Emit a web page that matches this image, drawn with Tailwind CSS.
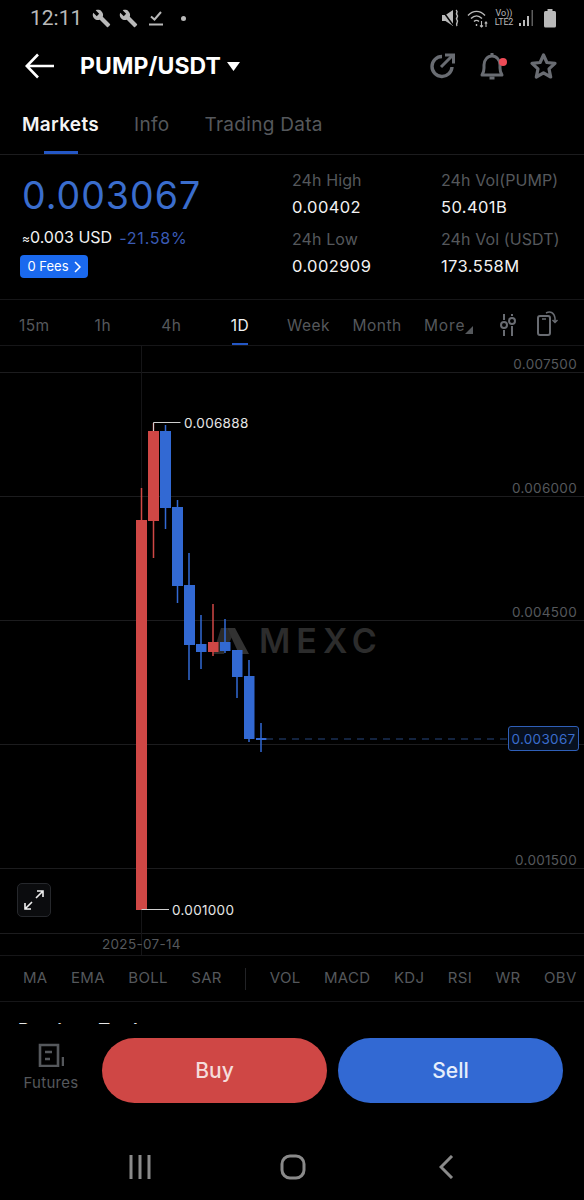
<!DOCTYPE html>
<html lang="en">
<head>
<meta charset="UTF-8" />
<meta name="viewport" content="width=device-width, initial-scale=1.0" />
<title>PUMP/USDT</title>
<script src="https://cdn.jsdelivr.net/npm/@tailwindcss/browser@4"></script>
</head>
<body class="bg-black">
<div class="w-[584px] h-[1200px] overflow-hidden bg-black text-white font-['Inter',sans-serif]">

  <!-- status bar -->
  <div class="h-9 flex items-center pl-[30px] pr-[28px] text-[#b9b9b9]">
    <span class="font-['Roboto',sans-serif] text-[21px] leading-none w-[62px]">12:11</span>
    <svg class="w-[19px] h-[19px]" viewBox="0 0 24 24" fill="currentColor"><path d="M22.7 19l-9.1-9.1c.9-2.3.4-5-1.5-6.9-2-2-5-2.4-7.4-1.3L9 6 6 9 1.6 4.7C.4 7.1.9 10.1 2.9 12.1c1.9 1.9 4.6 2.4 6.9 1.5l9.1 9.1c.4.4 1 .4 1.4 0l2.3-2.3c.5-.4.5-1.1.1-1.4z"/></svg>
    <svg class="w-[19px] h-[19px] ml-2" viewBox="0 0 24 24" fill="currentColor"><path d="M22.7 19l-9.1-9.1c.9-2.3.4-5-1.5-6.9-2-2-5-2.4-7.4-1.3L9 6 6 9 1.6 4.7C.4 7.1.9 10.1 2.9 12.1c1.9 1.9 4.6 2.4 6.9 1.5l9.1 9.1c.4.4 1 .4 1.4 0l2.3-2.3c.5-.4.5-1.1.1-1.4z"/></svg>
    <svg class="w-[16px] h-[16px] ml-[10px]" viewBox="0 0 16 16" fill="none" stroke="currentColor" stroke-width="2"><path d="M3 6.500l3.500 3L13 2"/><path d="M1 14.500h14"/></svg>
    <span class="w-[5px] h-[5px] rounded-full bg-[#b9b9b9] ml-[17px]"></span>
    <div class="flex-1"></div>
    <svg class="w-[18px] h-[18px]" viewBox="0 0 18 18" fill="currentColor"><path d="M0 6h3.500L11 1v16l-7.500-5H0z"/><path d="M0 1l11 15" stroke="#000" stroke-width="1.500"/><path d="M14 1c3 2-1 3 1 5s-2 3 0 5-2 3 0 6" fill="none" stroke="currentColor" stroke-width="1.500"/></svg>
    <svg class="w-[21px] h-[19px] ml-[7px]" viewBox="0 0 21 19" fill="none" stroke="currentColor" stroke-width="1.400"><path d="M1 6.500c5-5.500 12-5.500 17 0"/><path d="M4 9.500c3.500-3.500 7.500-3.500 11 0"/><path d="M7 12.500c1.500-1.500 3.500-1.500 5 0"/><path d="M9.500 15v2"/><path d="M14.500 12v6M13 16.500l1.500 1.500 1.500-1.500M19 18v-5M17.800 14.500l1.200-1.500 1.200 1.500" stroke-width="1.100"/></svg>
    <div class="ml-[5px] w-[22px] text-[9px] leading-[9px] text-center font-['Roboto',sans-serif]">
      <div>Vo))</div>
      <div class="tracking-[-0.2px]">LTE2</div>
    </div>
    <svg class="w-[16px] h-[17px] ml-[3px]" viewBox="0 0 16 17" fill="currentColor"><rect x="1" y="13" width="2" height="3"/><rect x="5" y="10" width="2" height="6"/><rect x="9" y="6" width="2" height="10"/><rect x="13.500" y="0" width="1.500" height="16" opacity=".5"/></svg>
    <svg class="w-[12px] h-[19px] ml-[10px]" viewBox="0 0 12 19" fill="currentColor"><rect x="3.500" y="0" width="5" height="2.500"/><rect x="0" y="2" width="12" height="16.500" rx="1.500"/></svg>
  </div>

  <!-- header -->
  <div class="h-[60px] flex items-center pl-[25px] pr-[26px]">
    <svg class="w-[30px] h-[26px]" viewBox="0 0 30 26" fill="none" stroke="#fff" stroke-width="2.600"><path d="M29 13H2M13 1.500L1.800 13 13 24.500"/></svg>
    <span class="ml-[25px] text-[23px] leading-none font-bold tracking-[0.1px]">PUMP/USDT</span>
    <svg class="ml-[6px] w-[13px] h-[9px]" viewBox="0 0 13 9" fill="#fff"><path d="M0 0h13L6.500 9z"/></svg>
    <div class="flex-1"></div>
    <svg class="w-[28px] h-[28px]" viewBox="0 0 28 28" fill="none" stroke="#696c72" stroke-width="3.400"><path d="M14 4.500A10 10 0 1 0 24 15"/><path d="M13 15L24 4" stroke-width="3"/><path d="M17 3h8.500v8.500" stroke-width="3"/></svg>
    <svg class="ml-[23px] w-[26px] h-[30px]" viewBox="0 0 26 30" fill="none" stroke="#696c72" stroke-width="3"><path d="M3 24c1.500-2 2-3.500 2-7v-3c0-5 3.500-9 8-9s8 4 8 9v3c0 3.500.5 5 2 7z" stroke-linejoin="round"/><path d="M10.500 27h5" stroke-width="3"/><path d="M13 2v3"/></svg>
    <svg class="ml-[24px] w-[29px] h-[29px]" viewBox="0 0 29 29" fill="none" stroke="#696c72" stroke-width="3.200" stroke-linejoin="round"><path d="M14.500 3l3.400 7.500 8.100.9-6 5.500 1.700 8.100-7.200-4.100-7.200 4.100 1.700-8.100-6-5.500 8.100-.9z"/></svg>
  </div>
  <div class="relative -mt-[60px] h-[60px] pointer-events-none">
    <span class="absolute left-[499px] top-[22px] w-[8px] h-[8px] rounded-full bg-[#ee4b57]"></span>
  </div>

  <!-- tabs -->
  <div class="h-[59px] flex gap-[35px] px-[22px] pt-4 border-b border-[#1c1c1e] text-[19px] leading-[26px] text-[#55585c] tracking-[0.3px]">
    <div class="flex flex-col items-center">
      <span class="font-semibold text-[#f4f4f4]">Markets</span>
      <span class="mt-[13px] w-[34px] h-[3px] bg-[#2457c5]"></span>
    </div>
    <span>Info</span>
    <span>Trading Data</span>
  </div>

  <!-- price stats -->
  <div class="h-[145px] flex border-b border-[#161618]">
    <div class="w-[292px] pl-[22px]">
      <div class="mt-[18px] text-[37.500px] leading-[46px] tracking-[1px] text-[#3a6dcd]">0.003067</div>
      <div class="mt-[9px] flex items-center text-[16px] leading-[18px] whitespace-nowrap">
        <span class="text-[#f2f2f2]"><span class="text-[12px]">≈</span>0.003 USD</span>
        <span class="ml-[7px] text-[#3a5bb5] tracking-[0.8px]">-21.58%</span>
      </div>
      <div class="mt-[7px] -ml-[2px] w-[68px] h-[23px] rounded-[4px] bg-[#1a69ee] flex items-center justify-center gap-[5px] text-[13px] leading-none">
        <span>0 Fees</span>
        <svg class="w-[7px] h-[12px]" viewBox="0 0 7 12" fill="none" stroke="#fff" stroke-width="1.500"><path d="M1 1l5 5-5 5"/></svg>
      </div>
    </div>
    <div class="w-[149px] pt-[14px] text-[16px] leading-[22px] tracking-[0.1px]">
      <div class="text-[#55585c]">24h High</div>
      <div class="mt-[5px] text-[#f2f2f2] text-[16.500px] tracking-[0.4px]">0.00402</div>
      <div class="mt-[10px] text-[#55585c]">24h Low</div>
      <div class="mt-[5px] text-[#f2f2f2] text-[16.500px] tracking-[0.4px]">0.002909</div>
    </div>
    <div class="flex-1 pt-[14px] text-[16px] leading-[22px] tracking-[0.1px] whitespace-nowrap">
      <div class="text-[#55585c]">24h Vol(PUMP)</div>
      <div class="mt-[5px] text-[#f2f2f2] text-[16.500px] tracking-[0.4px]">50.401B</div>
      <div class="mt-[10px] text-[#55585c]">24h Vol (USDT)</div>
      <div class="mt-[5px] text-[#f2f2f2] text-[16.500px] tracking-[0.4px]">173.558M</div>
    </div>
  </div>

  <!-- timeframes -->
  <div class="h-[46px] flex border-b border-[#161618] text-[15.500px] text-[#55585c] tracking-[0.5px]">
    <div class="w-[480px] grid grid-cols-7 text-center">
      <span class="pt-[17px] leading-[18px]">15m</span>
      <span class="pt-[17px] leading-[18px]">1h</span>
      <span class="pt-[17px] leading-[18px]">4h</span>
      <span class="relative pt-[17px] leading-[18px] text-[#f2f2f2]">1D<span class="absolute left-[26px] bottom-0 w-[16px] h-[2px] bg-[#2457c5]"></span></span>
      <span class="pt-[17px] leading-[18px]">Week</span>
      <span class="pt-[17px] leading-[18px]">Month</span>
      <span class="relative pt-[17px] leading-[18px] -ml-[2px] tracking-[0.9px]">More<svg class="absolute left-[56px] top-[26px] w-[8px] h-[8px]" viewBox="0 0 8 8" fill="#55585c"><path d="M8 0v8H0z"/></svg></span>
    </div>
    <svg class="ml-[19px] mt-[13px] w-[18px] h-[24px]" viewBox="0 0 18 24" fill="none" stroke="#696c72" stroke-width="2"><path d="M5 1v6M5 17v6M13 1v2M13 13v10"/><circle cx="5" cy="12" r="3"/><circle cx="13" cy="8" r="3"/></svg>
    <svg class="ml-[20px] mt-[10px] w-[21px] h-[26px]" viewBox="0 0 21 26" fill="none" stroke="#696c72" stroke-width="2"><rect x="1" y="6" width="12" height="19" rx="2"/><path d="M5 9h4" stroke-width="1.500"/><path d="M9 3c4-2 8-1 9 5v4M15.500 10l2.500 2.500 2.500-2.500" stroke-width="1.500"/></svg>
  </div>

  <!-- chart -->
  <div class="relative h-[610px] border-b border-[#161618] text-[13.500px] leading-[14px] tracking-[0.3px]">
    <!-- watermark goes under the candles -->
    <svg class="absolute left-[213px] top-[282px] w-[36px] h-[26px]" viewBox="0 0 36 26" fill="#2a2a2a"><path d="M8 0h6l5 9-7 14-1 3H0z"/><path d="M14 0h8l14 26H26z" fill="#323232"/></svg>
    <span class="absolute left-[259px] top-[277px] text-[34px] leading-[36px] font-semibold tracking-[6px] text-[#2c2c2c]">MEXC</span>

    <svg class="absolute left-0 top-0 w-[584px] h-[609px]" viewBox="0 346 584 609">
      <g stroke="#1c1c1e" stroke-width="1">
        <path d="M0 372.500H584M0 496.500H584M0 620.500H584M0 744.500H584M0 868.500H584M0 933.500H584"/>
        <path d="M141.500 346V955" stroke="#151517"/>
      </g>
      <g stroke="#cf4745" stroke-width="1.500">
        <path d="M141.500 488V520M153.500 423V558M213 604V656"/>
      </g>
      <g fill="#cf4745">
        <rect x="136" y="520" width="11" height="390"/>
        <rect x="148" y="431" width="11" height="90"/>
        <rect x="208" y="642" width="10.500" height="10"/>
      </g>
      <g stroke="#3269d3" stroke-width="1.500">
        <path d="M165.500 425V529M177.500 500V603M189 553V680M201 615V669M225 619V653M237 650V698M249 660V742M261 723V752"/>
      </g>
      <g fill="#3269d3">
        <rect x="160" y="431" width="11" height="77"/>
        <rect x="172" y="507" width="11" height="79"/>
        <rect x="184" y="585" width="11" height="60"/>
        <rect x="196" y="644" width="10.500" height="8"/>
        <rect x="220" y="642" width="10.500" height="9"/>
        <rect x="232" y="650" width="10.500" height="27"/>
        <rect x="244" y="676" width="10.500" height="63"/>
        <rect x="256" y="738" width="10.500" height="2"/>
      </g>
      <path d="M266 739H508" stroke="#27477f" stroke-width="1" stroke-dasharray="7 6"/>
      <path d="M153.500 431V422.500H180.500M141.500 909.500H169" fill="none" stroke="#cfcfcf" stroke-width="1"/>
    </svg>

    <span class="absolute left-[184px] top-[70px] text-[#e6e6e6]">0.006888</span>
    <span class="absolute left-[172px] top-[557px] text-[#e6e6e6]">0.001000</span>
    <span class="absolute right-[7px] top-[11px] text-[#55585c]">0.007500</span>
    <span class="absolute right-[7px] top-[135px] text-[#55585c]">0.006000</span>
    <span class="absolute right-[7px] top-[259px] text-[#55585c]">0.004500</span>
    <span class="absolute right-[7px] top-[507px] text-[#55585c]">0.001500</span>
    <span class="absolute left-[508px] top-[380px] w-[71px] h-[25px] flex items-center justify-center rounded-[3px] border border-[#2f5fb8] bg-[#07101f] text-[#3a6dcd]">0.003067</span>
    <span class="absolute left-[102px] top-[591px] text-[#55585c]">2025-07-14</span>
    <div class="absolute left-[17px] top-[537px] w-[34px] h-[34px] rounded-[5px] border border-[#26282c] bg-[#0b0c0e] flex items-center justify-center">
      <svg class="w-[22px] h-[22px]" viewBox="0 0 22 22" fill="none" stroke="#f0f0f0" stroke-width="1.600"><path d="M13 9l7-7M14 2h6v6M9 13l-7 7M2 14v6h6"/></svg>
    </div>
  </div>

  <!-- indicators -->
  <div class="h-[46px] flex items-center pl-[23px] gap-[23.500px] border-b border-[#161618] text-[15px] text-[#55585c] tracking-[0.3px] whitespace-nowrap">
    <span>MA</span>
    <span>EMA</span>
    <span>BOLL</span>
    <span>SAR</span>
    <span class="w-px h-[22px] bg-[#222326]"></span>
    <span>VOL</span>
    <span>MACD</span>
    <span>KDJ</span>
    <span>RSI</span>
    <span>WR</span>
    <span>OBV</span>
  </div>

  <!-- section title, cut off by the bottom bar as in the app -->
  <div class="h-[22px] overflow-hidden pl-[18px] pt-[18px] text-[18px] leading-[22px] font-semibold text-[#e6e6e6]">Previous Trades</div>

  <!-- buy / sell bar -->
  <div class="h-[79px] flex items-start pt-[14px]">
    <div class="w-[102px] flex flex-col items-center text-[15px] leading-[18px] text-[#55585c]">
      <svg class="w-[26px] h-[24px] mt-[5px]" viewBox="0 0 26 24" fill="none" stroke="#55585c" stroke-width="2.600"><path d="M2 2h18v21H2zM7 9h7M7 16h5"/><path d="M25 14v9" stroke-width="2.500"/></svg>
      <span class="mt-[7px] tracking-[0.3px]">Futures</span>
    </div>
    <div class="w-[225px] h-[65px] rounded-full bg-[#cf4745] flex items-center justify-center text-[21px] font-medium text-[#f5dcdb]">Buy</div>
    <div class="ml-[11px] w-[225px] h-[65px] rounded-full bg-[#3269d3] flex items-center justify-center text-[21px] font-medium text-[#e6eefb]">Sell</div>
  </div>

  <!-- android nav -->
  <div class="flex items-start pt-[52px] pl-[129px]">
    <svg class="w-[22px] h-[24px]" viewBox="0 0 22 24" fill="none" stroke="#8a8a8a" stroke-width="3"><path d="M2 0v24M11 0v24M20 0v24"/></svg>
    <svg class="ml-[129px] w-[26px] h-[26px] -mt-[1px]" viewBox="0 0 26 26" fill="none" stroke="#8a8a8a" stroke-width="3"><rect x="2" y="2" width="22" height="22" rx="8"/></svg>
    <svg class="ml-[133px] w-[15px] h-[24px]" viewBox="0 0 15 24" fill="none" stroke="#8a8a8a" stroke-width="3"><path d="M13 1L2 12l11 11"/></svg>
  </div>
</div>
</body>
</html>
